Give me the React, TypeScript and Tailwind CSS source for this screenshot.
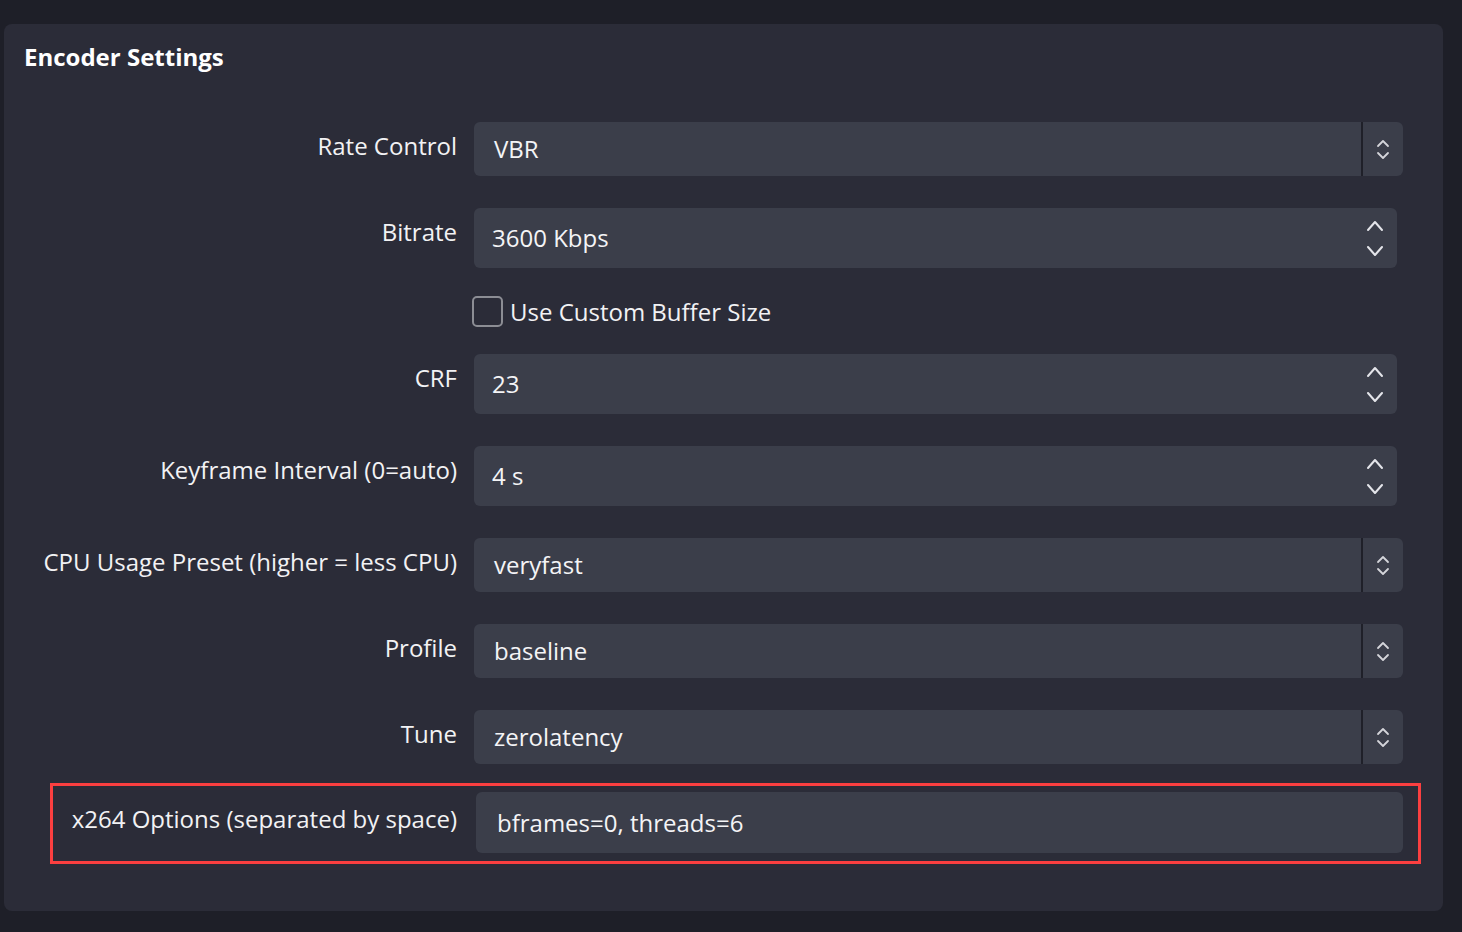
import React from "react";

const font = { fontFamily: '"Open Sans", "Noto Sans", sans-serif' };

function ComboArrows() {
  return (
    <svg width="14" height="26" viewBox="0 0 14 26" fill="none" stroke="#d4d5da" strokeWidth="1.8" strokeLinecap="round" strokeLinejoin="round">
      <path d="M2 10 L7 5 L12 10" />
      <path d="M2 17 L7 22 L12 17" />
    </svg>
  );
}

function SpinArrows() {
  return (
    <svg width="18" height="36" viewBox="0 0 18 36" fill="none" stroke="#e4e5ea" strokeWidth="2" strokeLinecap="round" strokeLinejoin="round">
      <path d="M2 10 L9 2 L16 10" />
      <path d="M2 27 L9 35 L16 27" />
    </svg>
  );
}

function Label({ children, top = "pt-[9px]" }: { children: React.ReactNode; top?: string }) {
  return (
    <div className={`w-[433px] shrink-0 text-right text-[24px] leading-[30px] text-[#f2f2f4] ${top}`}>{children}</div>
  );
}

function Combo({ label, value }: { label: string; value: string }) {
  return (
    <div className="flex items-start gap-[17px]">
      <Label>{label}</Label>
      <div className="flex h-[54px] flex-1 items-stretch overflow-hidden rounded-[6px] bg-[#3b3e4a]">
        <div className="flex flex-1 items-center pl-5 text-[24px] leading-[30px] text-[#f4f4f6]">{value}</div>
        <div className="w-[2px] bg-[#1f2029]" />
        <div className="flex w-[40px] items-center justify-center">
          <ComboArrows />
        </div>
      </div>
    </div>
  );
}

function Spin({ label, value }: { label: string; value: string }) {
  return (
    <div className="flex items-start gap-[17px]">
      <Label>{label}</Label>
      <div className="mr-[6px] flex h-[60px] flex-1 items-center rounded-[6px] bg-[#3b3e4a] pl-[18px] pr-[13px]">
        <div className="flex-1 text-[24px] leading-[30px] text-[#f4f4f6]">{value}</div>
        <SpinArrows />
      </div>
    </div>
  );
}

export default function App() {
  return (
    <div className="min-h-[932px] w-full bg-[#1e1f28] pl-[4px] pr-[19px] pt-[24px]" style={font}>
      <div className="h-[887px] rounded-[8px] bg-[#2b2c38] pl-5 pr-[40px] pt-[17px]">
        <h2 className="text-[24px] font-bold leading-[32px] text-white">Encoder Settings</h2>

        <div className="mt-[49px] flex flex-col">
          <Combo label="Rate Control" value="VBR" />
          <div className="mt-[32px]">
            <Spin label="Bitrate" value="3600 Kbps" />
          </div>
          <div className="mt-[28px] flex h-[31px] items-center gap-[7px] pl-[448px]">
            <div className="h-[31px] w-[31px] rounded-[5px] border-2 border-[#8c8d94]" />
            <span className="text-[24px] leading-[30px] text-[#f2f2f4]">Use Custom Buffer Size</span>
          </div>
          <div className="mt-[27px]">
            <Spin label="CRF" value="23" />
          </div>
          <div className="mt-[32px]">
            <Spin label="Keyframe Interval (0=auto)" value="4 s" />
          </div>
          <div className="mt-[32px]">
            <Combo label="CPU Usage Preset (higher = less CPU)" value="veryfast" />
          </div>
          <div className="mt-[32px]">
            <Combo label="Profile" value="baseline" />
          </div>
          <div className="mt-[32px]">
            <Combo label="Tune" value="zerolatency" />
          </div>

          <div className="relative mt-[28px] flex items-start gap-[19px]">
            <Label top="pt-[12px]">x264 Options (separated by space)</Label>
            <div className="flex h-[61px] flex-1 items-center rounded-[6px] bg-[#3b3e4a] pl-[21px] text-[24px] leading-[30px] text-[#f4f4f6]">
              bframes=0, threads=6
            </div>
            <div className="pointer-events-none absolute left-[26px] right-[-18px] top-[-9px] h-[81px] border-[3px] border-[#fb3f40]" />
          </div>
        </div>
      </div>
    </div>
  );
}
